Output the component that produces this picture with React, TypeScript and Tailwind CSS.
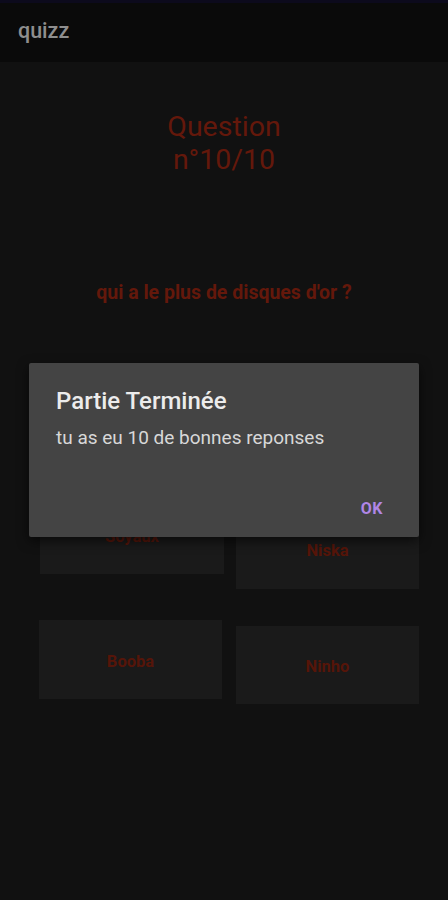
import React from "react";

export default function App() {
  const font = { fontFamily: "Roboto, 'Noto Sans', sans-serif" };
  return (
    <div className="relative w-[448px] h-[900px] bg-[#111111] overflow-hidden" style={font}>
      <div className="h-[3px] bg-[#0c0a1c]" />
      <div className="h-[59px] bg-[#0a0a0a] flex items-center pl-[18px]">
        <span className="text-[21.5px] font-medium text-[#8e8e8e] leading-none -mt-[3px]">quizz</span>
      </div>
      <div className="flex flex-col items-center mt-[48px]">
        <div className="text-[28.5px] leading-[33px] text-[#64180b] text-center">
          Question
          <br />
          n°10/10
        </div>
        <div className="mt-[106px] text-[19.5px] leading-[22px] font-bold text-[#64180b]">
          qui a le plus de disques d'or ?
        </div>
      </div>
      <div className="flex mt-[191px]">
        <div className="flex flex-col ml-[39px] w-[185px]">
          <div className="h-[79px] pt-[5px] bg-[#1a1a1a] flex items-center justify-center text-[16.5px] font-bold text-[#561509] ml-[1px]">
            Soyaux
          </div>
          <div className="h-[79px] pt-[5px] mt-[46px] w-[183px] bg-[#1a1a1a] flex items-center justify-center text-[16.5px] font-bold text-[#561509]">
            Booba
          </div>
        </div>
        <div className="flex flex-col ml-[12px] w-[183px]">
          <div className="h-[79px] pt-[4px] mt-[15px] bg-[#1a1a1a] flex items-center justify-center text-[16.5px] font-bold text-[#561509]">
            Niska
          </div>
          <div className="h-[78px] pt-[4px] mt-[37px] bg-[#1a1a1a] flex items-center justify-center text-[16.5px] font-bold text-[#561509]">
            Ninho
          </div>
        </div>
      </div>
      <div className="absolute left-[29px] top-[363px] w-[390px] h-[174px] bg-[#444444] rounded-[2px] shadow-[0_4px_12px_rgba(0,0,0,0.6)]">
        <div className="pl-[27px] pt-[23px] text-[24px] leading-[30px] font-medium text-[#ececec]">
          Partie Terminée
        </div>
        <div className="pl-[27px] mt-[11px] text-[19px] leading-[22px] text-[#d8d8d8]">
          tu as eu 10 de bonnes reponses
        </div>
        <div className="absolute right-[36px] top-[134px] text-[16px] font-bold text-[#b086e6] tracking-[0.5px]">
          OK
        </div>
      </div>
    </div>
  );
}
